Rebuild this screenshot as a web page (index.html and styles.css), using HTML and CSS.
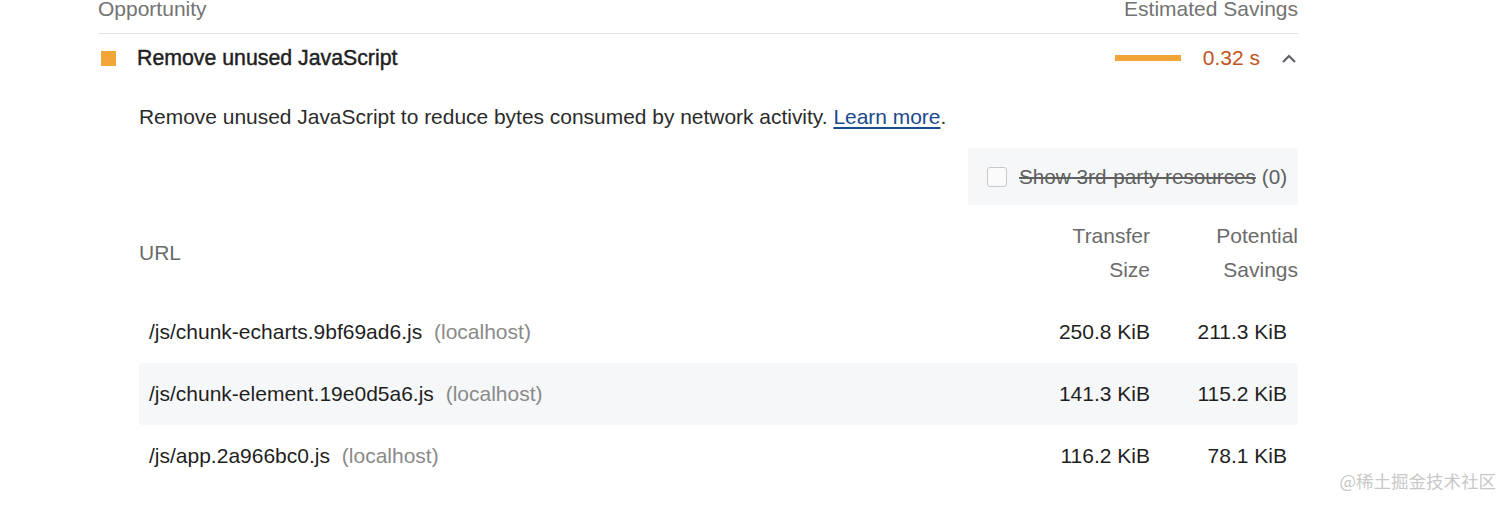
FILE: index.html
```html
<!DOCTYPE html>
<html lang="en">
<head>
<meta charset="utf-8">
<title>Remove unused JavaScript</title>
<link rel="stylesheet" href="styles.css">
</head>
<body>
<div class="report">
  <div class="group-header">
    <span>Opportunity</span>
    <span>Estimated Savings</span>
  </div>
  <div class="audit-title-row">
    <span class="score-square"></span>
    <span class="audit-title">Remove unused JavaScript</span>
    <span class="savings-bar"></span>
    <span class="savings-value">0.32 s</span>
    <svg class="chevron" width="16" height="10" viewBox="0 0 16 10"><polyline points="2,9 8,3 14,9" fill="none" stroke="#5f6368" stroke-width="2.2"/></svg>
  </div>
  <div class="audit-details">
    <p class="description">Remove unused JavaScript to reduce bytes consumed by network activity. <a class="learn" href="#">Learn more</a>.</p>
    <div class="filter-wrap">
      <label class="filter">
        <span class="checkbox"></span>
        <span class="filter-text">Show 3rd-party resources</span>
        <span class="filter-count">(0)</span>
      </label>
    </div>
    <div class="table">
      <div class="thead">
        <div class="th th-url">URL</div>
        <div class="th th-num">Transfer<br>Size</div>
        <div class="th th-num">Potential<br>Savings</div>
      </div>
      <div class="tr">
        <div class="td td-url">/js/chunk-echarts.9bf69ad6.js <span class="host">(localhost)</span></div>
        <div class="td td-num">250.8 KiB</div>
        <div class="td td-num td-last">211.3 KiB</div>
      </div>
      <div class="tr tr-alt">
        <div class="td td-url">/js/chunk-element.19e0d5a6.js <span class="host">(localhost)</span></div>
        <div class="td td-num">141.3 KiB</div>
        <div class="td td-num td-last">115.2 KiB</div>
      </div>
      <div class="tr">
        <div class="td td-url">/js/app.2a966bc0.js <span class="host">(localhost)</span></div>
        <div class="td td-num">116.2 KiB</div>
        <div class="td td-num td-last">78.1 KiB</div>
      </div>
    </div>
  </div>
</div>
<div class="watermark">@稀土掘金技术社区</div>
</body>
</html>
```

FILE: styles.css
```css
html, body {
  margin: 0;
  padding: 0;
  background: #ffffff;
  overflow: hidden;
}
body {
  font-family: "Liberation Sans", Arial, sans-serif;
  font-size: 21px;
  color: #212121;
  height: 507px;
  position: relative;
}
.report {
  width: 1200px;
  margin-left: 98px;
}
.group-header {
  margin-top: -3px;
  display: flex;
  justify-content: space-between;
  line-height: 24px;
  padding-bottom: 12px;
  border-bottom: 1px solid #e3e3e3;
  color: #737373;
}
.audit-title-row {
  height: 48px;
  display: flex;
  align-items: center;
}
.score-square {
  width: 15px;
  height: 15px;
  margin-left: 3px;
  background: #f2a63a;
}
.audit-title {
  margin-left: 21px;
  font-size: 21.3px;
  -webkit-text-stroke: 0.45px #1f1f1f;
  color: #1f1f1f;
  flex: 1;
}
.savings-bar {
  width: 66px;
  height: 6px;
  background: #f2a63a;
}
.savings-value {
  margin-left: 22px;
  color: #bf5420;
}
.chevron {
  margin-left: 21px;
  margin-right: 1px;
}
.audit-details {
  padding-left: 41px;
}
.description {
  margin: 23px 0 0 0;
  line-height: 24px;
  font-size: 20.95px;
  color: #2b2b2b;
}
.learn {
  color: #1a4a8f;
  text-decoration: underline;
  text-underline-offset: 3px;
}
.filter-wrap {
  display: flex;
  justify-content: flex-end;
  margin-top: 19px;
}
.filter {
  width: 330px;
  height: 57px;
  box-sizing: border-box;
  background: #f6f7f9;
  display: flex;
  align-items: center;
  padding-left: 19px;
  color: #5f5f5f;
  font-size: 20.7px;
}
.checkbox {
  width: 18px;
  height: 18px;
  border: 1px solid #c8c8c8;
  border-radius: 3px;
  background: #fbfbfb;
  margin-right: 12px;
}
.filter-text {
  text-decoration: line-through;
  margin-right: 6px;
}
.table {
  margin-top: 14px;
}
.thead {
  display: grid;
  grid-template-columns: 1fr 138px 148px;
  line-height: 34px;
  color: #6b6b6b;
  padding-bottom: 14px;
}
.th-url {
  align-self: center;
}
.th-num {
  text-align: right;
}
.tr {
  display: grid;
  grid-template-columns: 1fr 138px 148px;
  height: 62px;
  align-items: center;
  border-radius: 4px;
}
.tr-alt {
  background: #f6f7f9;
}
.td-url {
  padding-left: 10px;
  color: #1f1f1f;
}
.host {
  color: #8a8a8a;
  margin-left: 6px;
}
.td-num {
  text-align: right;
  color: #1f1f1f;
}
.td-last {
  padding-right: 11px;
}
.watermark {
  position: absolute;
  right: 16px;
  bottom: 15px;
  font-family: "Noto Sans CJK SC", sans-serif;
  font-size: 17.5px;
  color: #c8c8c8;
  line-height: 22px;
}
```
